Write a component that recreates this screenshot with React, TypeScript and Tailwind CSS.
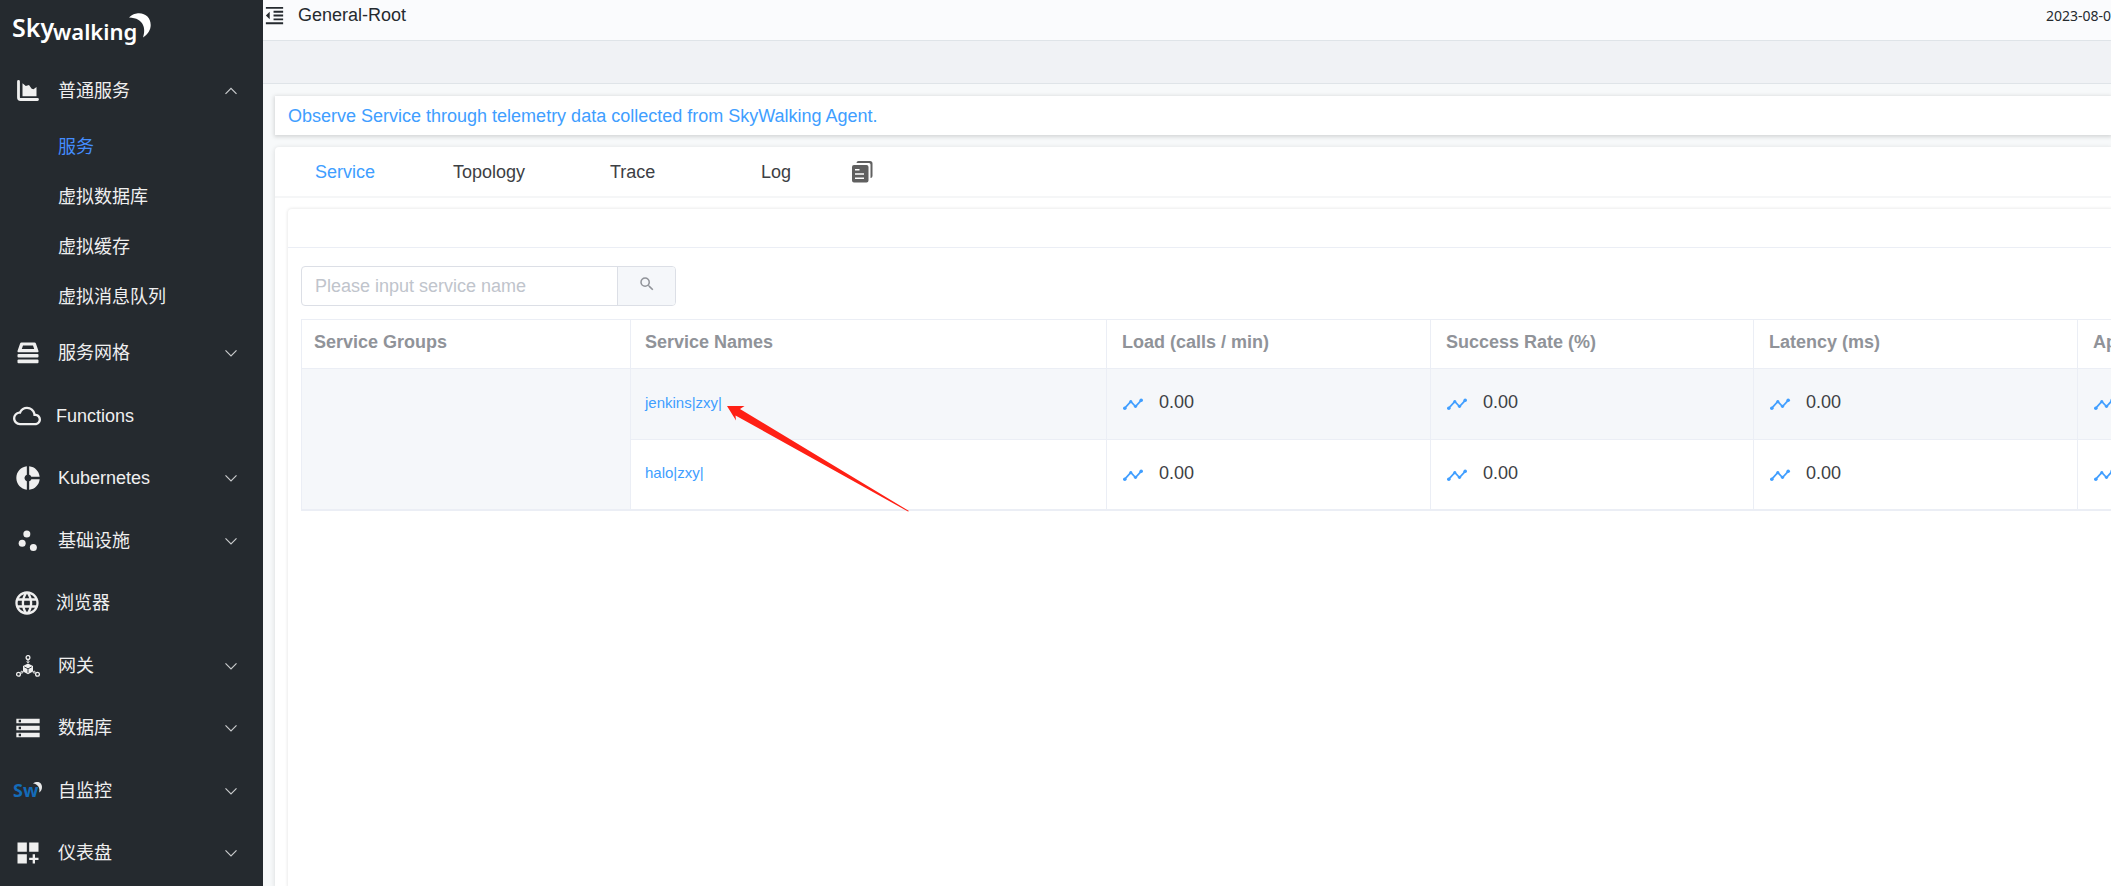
import type { ReactNode } from 'react';
import clsx from 'clsx';
import {
  MdCloudQueue,
  MdDashboardCustomize,
  MdDonutSmall,
  MdFormatIndentDecrease,
  MdLanguage,
  MdScatterPlot,
  MdSearch,
  MdStorage,
} from 'react-icons/md';

interface MenuItem {
  title: string;
  icon: ReactNode;
  leaf?: boolean;
  children?: string[];
}

interface ServiceRow {
  name: string;
  active?: boolean;
}

function ChartIcon() {
  return (
    <svg viewBox="0 0 22 22" className="size-[22px]" fill="currentColor">
      <path
        d="M1.500 1.500v16a2 2 0 0 0 2 2h17"
        fill="none"
        stroke="currentColor"
        strokeWidth="2.800"
        strokeLinecap="round"
      />
      <path d="M5.500 16.300V3.300L8.800 6l3.200-1 2.700 3.700 1.800.6 3-2.300v9.300h-14Z" />
    </svg>
  );
}

// Stack of layers used by the service mesh entry
function MeshIcon() {
  return (
    <svg viewBox="0 0 22 22" className="size-[22px]" fill="currentColor">
      <path
        fillRule="evenodd"
        d="M4.500.500h13a1.500 1.500 0 0 1 1.400 1l2.600 7.500a1 1 0 0 1-1 1.200h-19a1 1 0 0 1-1-1.200L3.100 1.500a1.500 1.500 0 0 1 1.400-1ZM6 3.500 4.800 7h12.400L16 3.500H6Z"
      />
      <rect x="0.500" y="12" width="21" height="3.500" rx="1" />
      <rect x="0.500" y="17.500" width="21" height="3.800" rx="1" />
    </svg>
  );
}

function GatewayIcon() {
  return (
    <svg viewBox="0 0 24 22" className="h-[22px] w-6" fill="none" stroke="currentColor">
      <path d="m12 8.500 5 2.600v5.400l-5 2.700-5-2.700v-5.400l5-2.600Z" fill="currentColor" stroke="none" />
      <path d="m8.300 11.900 3.700 1.900 3.700-1.900M12 13.800v4" stroke="#252a2f" strokeWidth="0.900" />
      <circle cx="12" cy="6.600" r="1" />
      <circle cx="5.800" cy="17.200" r="1" />
      <circle cx="18.200" cy="17.200" r="1" />
      <circle cx="12" cy="2.500" r="1.900" strokeWidth="1.300" />
      <circle cx="2.500" cy="19.300" r="1.900" strokeWidth="1.300" />
      <circle cx="21.500" cy="19.300" r="1.900" strokeWidth="1.300" />
    </svg>
  );
}

function SwIcon() {
  return (
    <svg viewBox="-1 -5 32 30" className="h-[30px] w-8">
      <text x="0" y="16" fontSize="18" fontWeight="700" fill="#146bb8" fontFamily="Noto Sans">
        Sw
      </text>
      <path
        d="M20 2.500C24-.5 29 1.200 29 6c0 2.400-1 4.200-2.800 5.400C27.200 7 25 3 20 2.500Z"
        fill="#e8e8e8"
      />
    </svg>
  );
}

function Logo() {
  return (
    <svg viewBox="-2 -10 150 56" className="h-14 w-[150px]" fill="#fff">
      <text x="0" y="25" fontSize="25" fontWeight="600" fontFamily="Noto Sans">
        Sky
      </text>
      <text x="41" y="28" fontSize="22" fontWeight="600" fontFamily="Noto Sans">
        walking
      </text>
      <path d="M117 5.500C121 2 124 1.300 127 1.300c7 0 11.700 5 11.700 11.700 0 5-3 9.500-7.700 12.500 3-8 1.500-19.500-14-20Z" />
    </svg>
  );
}

function DocsIcon() {
  return (
    <svg viewBox="0 0 22 22" className="size-[22px]" fill="#606060">
      <path d="M6.500 0H18a2.500 2.500 0 0 1 2.500 2.500V15a2 2 0 0 1-2 2V3.500A1.500 1.500 0 0 0 17 2H4.500a2 2 0 0 1 2-2Z" />
      <path
        fillRule="evenodd"
        d="M2 4h12.500a2 2 0 0 1 2 2v13.500a2 2 0 0 1-2 2H2a2 2 0 0 1-2-2V6a2 2 0 0 1 2-2Zm1 4v1.500h4.500V8H3Zm0 4.200v1.500h9v-1.500H3Zm0 4.200v1.500h9v-1.500H3Z"
      />
    </svg>
  );
}

function TrendIcon() {
  return (
    <svg viewBox="0 0 22 22" className="mt-1 size-[22px]" fill="#409eff">
      <path d="m2.800 15.200 6-6.700 4.700 5 5.700-6.200" fill="none" stroke="#409eff" strokeWidth="1.800" />
      <circle cx="2.800" cy="15.200" r="1.800" />
      <circle cx="8.800" cy="8.700" r="1.600" />
      <circle cx="13.500" cy="13.300" r="1.600" />
      <circle cx="19.200" cy="7.300" r="1.800" />
    </svg>
  );
}

function Chevron({ up }: { up?: boolean }) {
  return (
    <svg viewBox="0 0 12 8" className="h-2 w-3" fill="none" stroke="#c9cbcd" strokeWidth="1.200">
      <path d={up ? 'M.5 6.800 6 1.300l5.500 5.500' : 'M.5 1.300 6 6.800l5.500-5.500'} />
    </svg>
  );
}

const menu: MenuItem[] = [
  {
    title: '普通服务',
    icon: <ChartIcon />,
    children: ['服务', '虚拟数据库', '虚拟缓存', '虚拟消息队列'],
  },
  { title: '服务网格', icon: <MeshIcon /> },
  { title: 'Functions', icon: <MdCloudQueue className="size-7" />, leaf: true },
  { title: 'Kubernetes', icon: <MdDonutSmall className="size-7" /> },
  { title: '基础设施', icon: <MdScatterPlot className="size-7" /> },
  { title: '浏览器', icon: <MdLanguage className="size-7" />, leaf: true },
  { title: '网关', icon: <GatewayIcon /> },
  { title: '数据库', icon: <MdStorage className="size-7" /> },
  { title: '自监控', icon: <SwIcon /> },
  { title: '仪表盘', icon: <MdDashboardCustomize className="size-7" /> },
];

const tabs = ['Service', 'Topology', 'Trace', 'Log'];

const metrics = ['Load (calls / min)', 'Success Rate (%)', 'Latency (ms)', 'Apdex'];

const services: ServiceRow[] = [{ name: 'jenkins|zxy|', active: true }, { name: 'halo|zxy|' }];

function SideBar() {
  return (
    <aside className="w-[263px] shrink-0 bg-[#252a2f] text-[#efefef]">
      <div className="flex h-[59px] items-start pt-0.5 pl-[10px]">
        <Logo />
      </div>
      <ul>
        {menu.map((item, i) => (
          <li key={item.title}>
            <button
              type="button"
              className={clsx(
                'flex w-full items-center pr-[26px] text-left',
                item.leaf ? 'pl-[11px]' : 'pl-3',
                i % 2 ? 'h-[62px]' : 'h-[63px]'
              )}
            >
              <span className="flex w-8 shrink-0 justify-center">{item.icon}</span>
              <span className={clsx('flex-1', item.leaf ? 'ml-[13px]' : 'ml-[14px]')}>{item.title}</span>
              {!item.leaf && <Chevron up={!!item.children} />}
            </button>
            {item.children && (
              <ul>
                {item.children.map((child, n) => (
                  <li key={child}>
                    <a
                      href="#"
                      className={clsx('flex h-[50px] items-center pl-[58px]', n === 0 && 'text-[#448dfe]')}
                    >
                      {child}
                    </a>
                  </li>
                ))}
              </ul>
            )}
          </li>
        ))}
      </ul>
    </aside>
  );
}

function ServiceTable() {
  return (
    <table className="w-[2260px] table-fixed border-separate border-spacing-0 border-t border-l border-[#ebeef5] text-left">
      <colgroup>
        <col className="w-[329px]" />
        <col className="w-[476px]" />
        <col className="w-[324px]" />
        <col className="w-[323px]" />
        <col className="w-[324px]" />
        <col />
      </colgroup>
      <thead>
        <tr className="h-[49px] text-[#909399]">
          <th className="border-r border-b border-[#ebeef5] pb-1 pl-3 font-bold">Service Groups</th>
          <th className="border-r border-b border-[#ebeef5] pb-1 pl-[14px] font-bold">Service Names</th>
          {metrics.map((metric) => (
            <th key={metric} className="border-r border-b border-[#ebeef5] pb-1 pl-[15px] font-bold">
              {metric}
            </th>
          ))}
        </tr>
      </thead>
      <tbody>
        {services.map((service, i) => (
          <tr key={service.name} className={clsx('h-[71px]', service.active && 'bg-[#f5f7fa]')}>
            {i === 0 && (
              <td rowSpan={services.length} className="border-r border-b-2 border-[#ebeef5] bg-[#f5f7fa]" />
            )}
            <td
              className={clsx(
                'border-r border-[#ebeef5] pb-1 pl-[14px]',
                i === services.length - 1 ? 'border-b-2' : 'border-b'
              )}
            >
              <a href="#" className="text-[15px] text-[#409eff]">
                {service.name}
              </a>
            </td>
            {metrics.map((metric) => (
              <td
                key={metric}
                className={clsx(
                  'border-r border-[#ebeef5] pb-1 pl-[15px]',
                  i === services.length - 1 ? 'border-b-2' : 'border-b'
                )}
              >
                <div className="flex items-center gap-[15px] text-[#3d4044]">
                  <TrendIcon />
                  <span>0.00</span>
                </div>
              </td>
            ))}
          </tr>
        ))}
      </tbody>
    </table>
  );
}

export default function App() {
  return (
    <div className="flex min-h-screen overflow-hidden bg-[#f7f9fa] font-['Liberation_Sans','Noto_Sans_CJK_SC',sans-serif] text-[18px] leading-6">
      <SideBar />

      <main className="flex min-w-0 flex-1 flex-col">
        <header className="flex h-[41px] items-start justify-between border-b border-[#dfe4e8] bg-[#fafbfd] text-[#252a2f]">
          <div className="flex items-center gap-3 pt-[3px]">
            <button type="button" aria-label="Collapse menu">
              <MdFormatIndentDecrease className="size-[23px]" />
            </button>
            <h1>General-Root</h1>
          </div>
          <span className="pt-1 font-['Noto_Sans',sans-serif] text-[14px]">2023-08-0</span>
        </header>
        <div className="h-[43px] border-b border-[#dfe4e8] bg-[#f0f2f5]" />

        <div className="flex flex-1 flex-col gap-3 pt-3 pl-3">
          <div className="flex h-[39px] items-center bg-white pl-[13px] text-[#409eff] shadow-[0_1px_4px_1px_#00000024]">
            Observe Service through telemetry data collected from SkyWalking Agent.
          </div>

          <section className="flex flex-1 flex-col rounded-tl bg-white shadow-[0_1px_4px_1px_#00000018]">
            <nav className="flex h-[51px] items-center border-b-2 border-[#f5f6f7] text-[#3d4044]">
              <div className="grid grid-cols-[138px_157px_151px_91px] pl-10">
                {tabs.map((tab, i) => (
                  <a key={tab} href="#" className={clsx(i === 0 && 'text-[#409eff]')}>
                    {tab}
                  </a>
                ))}
              </div>
              <button type="button" aria-label="Documents">
                <DocsIcon />
              </button>
            </nav>

            <div className="mt-[11px] ml-[13px] flex-1 overflow-hidden rounded-tl bg-white shadow-[0_0_3px_1px_#00000014]">
              <div className="h-[39px] border-b border-[#ebeef5]" />
              <div className="pt-[18px] pl-[13px]">
                <div className="flex h-10 w-[375px] overflow-hidden rounded border border-[#dcdfe6]">
                  <input
                    type="text"
                    aria-label="Service name"
                    placeholder="Please input service name"
                    className="min-w-0 flex-1 px-[13px] outline-none placeholder:text-[#c0c4cc]"
                  />
                  <button
                    type="button"
                    aria-label="Search"
                    className="flex w-[58px] items-center justify-center border-l border-[#dcdfe6] bg-[#f5f7fa] pb-1 text-[#909399]"
                  >
                    <MdSearch className="size-[18px]" />
                  </button>
                </div>
                {/* The arrow lies over the table and points at the first service */}
                <div className="relative mt-[13px]">
                  <ServiceTable />
                  <svg
                    viewBox="0 0 184 106"
                    className="pointer-events-none absolute top-[87px] left-[425px] h-[106px] w-[184px]"
                    fill="#ff2015"
                  >
                    <path d="M1 0 18.500 0 14 3 183 105 182 105.500 9.500 9.500 10 14.500Z" />
                  </svg>
                </div>
              </div>
            </div>
          </section>
        </div>
      </main>
    </div>
  );
}
